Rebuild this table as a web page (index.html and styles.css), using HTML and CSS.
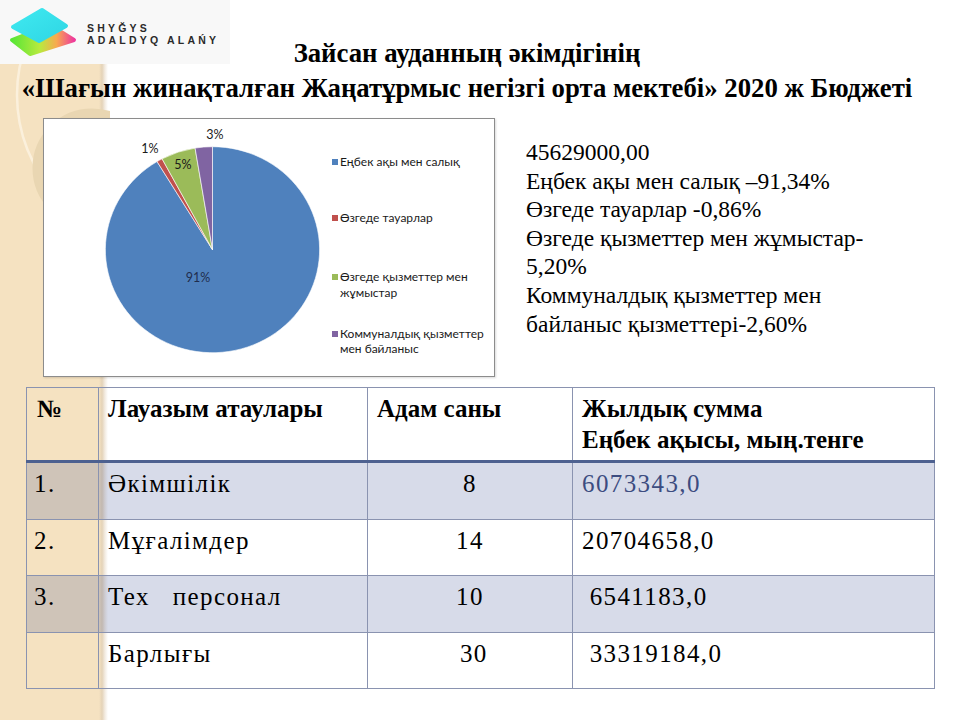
FILE: index.html
```html
<!DOCTYPE html>
<html lang="kk">
<head>
<meta charset="utf-8">
<title>Бюджет 2020</title>
<link rel="stylesheet" href="styles.css">
</head>
<body>
<div class="slide">
  <svg class="deco" width="110" height="300" viewBox="0 0 110 300">
    <circle cx="165" cy="95" r="148" fill="none" stroke="#fbf0dc" stroke-width="2.5"/>
    <circle cx="92" cy="168" r="54" fill="none" stroke="#e9d6b2" stroke-width="11"/>
    <circle cx="92" cy="168" r="47" fill="none" stroke="#f8ecd6" stroke-width="1.5"/>
  </svg>

  <div class="logo">
    <svg class="logo-mark" width="80" height="60" viewBox="0 0 80 60">
      <defs>
        <linearGradient id="lg-bottom" x1="0" y1="0" x2="1" y2="0">
          <stop offset="0" stop-color="#58e636"/>
          <stop offset="0.45" stop-color="#b9ea3e"/>
          <stop offset="0.72" stop-color="#f8a94f"/>
          <stop offset="1" stop-color="#ee3a9c"/>
        </linearGradient>
        <linearGradient id="lg-top" x1="0" y1="0" x2="1" y2="1">
          <stop offset="0" stop-color="#3fe9f0"/>
          <stop offset="1" stop-color="#2fd6e4"/>
        </linearGradient>
      </defs>
      <polygon points="12,38 50,23 74,38 30,52" fill="url(#lg-bottom)" stroke="url(#lg-bottom)" stroke-width="4" stroke-linejoin="round"/>
      <polygon points="13,25 42,8 66,24 39,39" fill="url(#lg-top)" stroke="url(#lg-top)" stroke-width="4" stroke-linejoin="round"/>
    </svg>
    <div class="logo-text">
      <span>SHYĞYS</span>
      <span>ADALDYQ ALAŃY</span>
    </div>
  </div>

  <h1 class="title">
    <span>Зайсан ауданның әкімдігінің</span>
    <span>«Шағын жинақталған Жаңатұрмыс негізгі орта мектебі» 2020 ж Бюджеті</span>
  </h1>

  <div class="middle">
    <div class="chart">
      <svg width="450" height="257" viewBox="0 0 450 257">
        <g transform="translate(168.5 130.7) scale(1.04 1)" stroke="#ffffff" stroke-width="0.6">
          <path d="M0 0 L0 -103 A103 103 0 1 1 -53.32 -88.13 Z" fill="#4f81bd"/>
          <path d="M0 0 L-53.32 -88.13 A103 103 0 0 1 -48.48 -90.88 Z" fill="#c0504d"/>
          <path d="M0 0 L-48.48 -90.88 A103 103 0 0 1 -16.75 -101.63 Z" fill="#9bbb59"/>
          <path d="M0 0 L-16.75 -101.63 A103 103 0 0 1 0 -103 Z" fill="#8064a2"/>
        </g>
        <g class="pie-label">
          <text x="154" y="163" class="on-blue">91%</text>
          <text x="106" y="34">1%</text>
          <text x="139" y="50">5%</text>
          <text x="171" y="20">3%</text>
        </g>
        <g class="legend">
          <rect x="288" y="40" width="6" height="6" fill="#4f81bd"/>
          <text x="296" y="47">Еңбек ақы мен салық</text>
          <rect x="288" y="96" width="6" height="6" fill="#c0504d"/>
          <text x="296" y="103">Өзгеде тауарлар</text>
          <rect x="288" y="155" width="6" height="6" fill="#9bbb59"/>
          <text x="296" y="162">Өзгеде қызметтер мен</text>
          <text x="296" y="178">жұмыстар</text>
          <rect x="288" y="212" width="6" height="6" fill="#8064a2"/>
          <text x="296" y="219">Коммуналдық қызметтер</text>
          <text x="296" y="234">мен байланыс</text>
        </g>
      </svg>
    </div>
    <div class="summary">
      <div>45629000,00</div>
      <div>Еңбек ақы мен салық –91,34%</div>
      <div>Өзгеде тауарлар -0,86%</div>
      <div>Өзгеде қызметтер мен жұмыстар-<br>5,20%</div>
      <div>Коммуналдық қызметтер мен<br>байланыс қызметтері-2,60%</div>
    </div>
  </div>

  <table class="budget">
    <colgroup>
      <col class="c-num">
      <col class="c-name">
      <col class="c-count">
      <col class="c-sum">
    </colgroup>
    <thead>
      <tr>
        <th>№</th>
        <th>Лауазым атаулары</th>
        <th>Адам саны</th>
        <th>Жылдық сумма<br>Еңбек ақысы, мың.тенге</th>
      </tr>
    </thead>
    <tbody>
      <tr class="shade">
        <td>1.</td>
        <td>Әкімшілік</td>
        <td class="count">8</td>
        <td class="accent">6073343,0</td>
      </tr>
      <tr>
        <td>2.</td>
        <td>Мұғалімдер</td>
        <td class="count">14</td>
        <td>20704658,0</td>
      </tr>
      <tr class="shade">
        <td>3.</td>
        <td>Тех&nbsp;&nbsp; персонал</td>
        <td class="count">10</td>
        <td>&nbsp;6541183,0</td>
      </tr>
      <tr>
        <td></td>
        <td>Барлығы</td>
        <td class="count">&nbsp;30</td>
        <td>&nbsp;33319184,0</td>
      </tr>
    </tbody>
  </table>
</div>
</body>
</html>
```

FILE: styles.css
```css
html, body {
  margin: 0;
  padding: 0;
}

body {
  width: 960px;
  height: 720px;
  overflow: hidden;
  font-family: "Liberation Serif", "Times New Roman", serif;
  color: #000;
  background-color: #fff;
  background-image:
    linear-gradient(to right, rgba(255,255,255,0) 0, rgba(255,255,255,0) 99px, #e4d3b8 102px, #f3ece2 105px, #ffffff 108px),
    linear-gradient(to right, #f5e2c1 0, #f5e2c1 108px, #ffffff 108px);
}

.slide {
  position: relative;
  width: 960px;
  height: 720px;
}

.deco {
  position: absolute;
  left: 0;
  top: 0;
}

/* Logo overlay */
.logo {
  position: absolute;
  left: 0;
  top: 0;
  width: 230px;
  height: 64px;
  background: #f8f8f8;
  display: flex;
  align-items: center;
  z-index: 2;
}

.logo-mark {
  flex: none;
}

.logo-text {
  display: flex;
  flex-direction: column;
  margin-left: 7px;
  margin-top: 4px;
  font-family: "Liberation Sans", Arial, sans-serif;
  font-weight: bold;
  font-size: 10.5px;
  line-height: 12.2px;
  letter-spacing: 3.2px;
  color: #2a2a2a;
}

/* Title */
.title {
  position: relative;
  display: flex;
  flex-direction: column;
  align-items: center;
  margin: 0;
  padding: 36px 26px 0 0;
  font-size: 26.75px;
  line-height: 35px;
  font-weight: bold;
  z-index: 1;
}

.title span {
  white-space: nowrap;
}

/* Chart + summary */
.middle {
  position: relative;
  display: flex;
  align-items: flex-start;
  margin-top: 12px;
  padding-left: 43px;
}

.chart {
  width: 450px;
  height: 257px;
  border: 1px solid #8c8c8c;
  background: #fff;
  box-shadow: 1px 1px 2px rgba(0,0,0,0.15);
}

.chart svg {
  display: block;
}

.pie-label text {
  font-family: Lato, "Open Sans", sans-serif;
  font-size: 12.5px;
  text-anchor: middle;
  fill: #1a1a1a;
}

.pie-label .on-blue {
  fill: #1f2d4d;
}

.legend text {
  font-family: Lato, "Open Sans", sans-serif;
  font-size: 12px;
  fill: #1a1a1a;
}

.summary {
  margin-left: 31px;
  margin-top: 20px;
  font-size: 23.5px;
  line-height: 28.6px;
  white-space: nowrap;
}

/* Table */
.budget {
  position: relative;
  margin: 10px 0 0 26px;
  width: 908px;
  border-collapse: collapse;
  table-layout: fixed;
}

.c-num { width: 72px; }
.c-name { width: 269px; }
.c-count { width: 205px; }
.c-sum { width: 362px; }

.budget th,
.budget td {
  border: 1px solid #8a93b0;
  text-align: left;
  vertical-align: top;
  padding: 0 8px 0 9px;
  white-space: nowrap;
}

.budget th {
  height: 67px;
  padding-top: 5px;
  font-size: 25px;
  font-weight: bold;
  line-height: 31px;
  border-bottom: 3px solid #4d6190;
}

.budget th:first-child {
  padding-left: 10px;
}

.budget td {
  height: 47.5px;
  padding-top: 8px;
  font-size: 25px;
  line-height: 25px;
  letter-spacing: 1.4px;
}

.budget td:first-child {
  padding-left: 7px;
}

.budget td.count {
  text-align: center;
  padding-left: 0;
  padding-right: 0;
}

.budget td.accent {
  color: #3c4c80;
}

.budget tr.shade td {
  background: rgba(64, 84, 150, 0.21);
}
```
